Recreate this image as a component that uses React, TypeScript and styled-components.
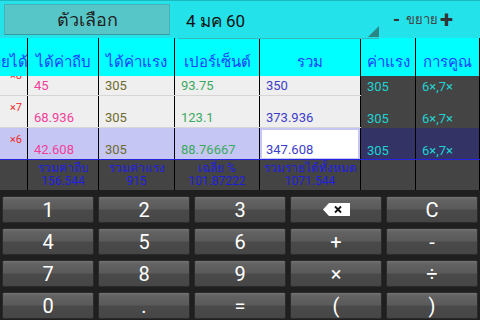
import React from "react";
import styled, { createGlobalStyle } from "styled-components";

const GlobalStyle = createGlobalStyle`
    html, body {
        margin: 0;
        padding: 0;
        background: #1f1f1f;
        font-family: Roboto, "Noto Sans", "DejaVu Sans", sans-serif;
    }
    * {
        box-sizing: border-box;
    }
`;

const COLS = "28px 71px 76px 85px 101px 55px 64px";

type Row = {
    label: string;
    thib: string;
    raeng: string;
    percent: string;
    total: string;
    wage: string;
    mult: string;
    selected?: boolean;
};

const rows: Row[] = [
    { label: "×8", thib: "45", raeng: "305", percent: "93.75", total: "350", wage: "305", mult: "6×,7×" },
    { label: "×7", thib: "68.936", raeng: "305", percent: "123.1", total: "373.936", wage: "305", mult: "6×,7×" },
    { label: "×6", thib: "42.608", raeng: "305", percent: "88.76667", total: "347.608", wage: "305", mult: "6×,7×", selected: true },
];

const headers = ["ได้ค่าถีบ", "ได้ค่าแรง", "เปอร์เซ็นต์", "รวม", "ค่าแรง", "การคูณ"];

const summary = [
    ["รวมค่าถีบ", "156.544"],
    ["รวมค่าแรง", "915"],
    ["เฉลี่ย %", "101.87222"],
    ["รวมรายได้ทั้งหมด", "1071.544"],
];

const keys = ["1", "2", "3", "back", "C", "4", "5", "6", "+", "-", "7", "8", "9", "×", "÷", "0", ".", "=", "(", ")"];

export default function App() {
    return (
        <Screen>
            <GlobalStyle />
            <TopBar>
                <OptionButton>ตัวเลือก</OptionButton>
                <DateSpinner>
                    4 มค 60
                    <SpinnerCorner />
                </DateSpinner>
                <ZoomControl>
                    <ZoomSign>-</ZoomSign>
                    <ZoomLabel>ขยาย</ZoomLabel>
                    <ZoomSign $big>+</ZoomSign>
                </ZoomControl>
            </TopBar>

            <HeaderRow>
                <HeaderCell $clip>
                    <ClippedText>รายได้</ClippedText>
                </HeaderCell>
                {headers.map((h) => (
                    <HeaderCell key={h}>{h}</HeaderCell>
                ))}
            </HeaderRow>

            <BodyViewport>
                <BodyScroll>
                    {rows.map((r) => (
                        <DataRow key={r.label} $selected={r.selected}>
                            <LabelCell>{r.label}</LabelCell>
                            <ValueCell $color="#f0409a">{r.thib}</ValueCell>
                            <ValueCell $color="#6e6a2c">{r.raeng}</ValueCell>
                            <ValueCell $color="#3aaa5e">{r.percent}</ValueCell>
                            <ValueCell $color="#3c3cc8">
                                {r.selected ? <EditBox>{r.total}</EditBox> : r.total}
                            </ValueCell>
                            <DarkCell $selected={r.selected}>{r.wage}</DarkCell>
                            <DarkCell $selected={r.selected}>{r.mult}</DarkCell>
                        </DataRow>
                    ))}
                </BodyScroll>
            </BodyViewport>

            <SummaryRow>
                <SummaryCell />
                {summary.map(([t, v]) => (
                    <SummaryCell key={t}>
                        <span>{t}</span>
                        <span>{v}</span>
                    </SummaryCell>
                ))}
                <SummaryCell />
                <SummaryCell />
            </SummaryRow>

            <Keypad>
                {keys.map((k) => (
                    <Key key={k}>
                        {k === "back" ? (
                            <svg width="27" height="13" viewBox="0 0 27 13">
                                <path d="M6 0H27V13H6L0 6.5Z" fill="#fff" />
                                <path d="M12 3.5L18 9.5M18 3.5L12 9.5" stroke="#111" strokeWidth="1.8" />
                            </svg>
                        ) : (
                            k
                        )}
                    </Key>
                ))}
            </Keypad>
        </Screen>
    );
}

const Screen = styled.div`
    width: 480px;
    height: 320px;
    overflow: hidden;
    background: #1f1f1f;
`;

const TopBar = styled.div`
    height: 38px;
    display: flex;
    align-items: center;
    background: #24e2ea;
    border-top: 1px solid #1cb8c0;
    padding: 0 4px;
`;

const OptionButton = styled.div`
    width: 166px;
    height: 31px;
    display: flex;
    align-items: center;
    justify-content: center;
    background: #56c6c8;
    border: 1px solid #48b0b2;
    border-bottom-color: #3a9a9c;
    color: #222;
    font-size: 18px;
`;

const DateSpinner = styled.div`
    position: relative;
    margin-left: 8px;
    width: 201px;
    height: 36px;
    display: flex;
    align-items: center;
    padding: 0 0 0 8px;
    margin-top: 2px;
    border-bottom: 1px solid #3bb6ba;
    color: #111;
    font-size: 17px;
`;

const SpinnerCorner = styled.div`
    position: absolute;
    right: 0;
    bottom: 1px;
    width: 0;
    height: 0;
    border-left: 11px solid transparent;
    border-bottom: 11px solid #2a8585;
`;

const ZoomControl = styled.div`
    display: flex;
    align-items: center;
    margin-left: 14px;
    gap: 6px;
    color: #444;
`;

const ZoomSign = styled.span<{ $big?: boolean }>`
    font-size: ${(p) => (p.$big ? 24 : 18)}px;
    font-weight: bold;
    color: #333;
    line-height: 1;
    margin-left: ${(p) => (p.$big ? -4 : 0)}px;
`;

const ZoomLabel = styled.span`
    font-size: 13px;
    color: #444;
`;

const HeaderRow = styled.div`
    display: grid;
    grid-template-columns: ${COLS};
    height: 38px;
    background: #00ffff;
`;

const HeaderCell = styled.div<{ $clip?: boolean }>`
    display: flex;
    align-items: flex-end;
    justify-content: ${(p) => (p.$clip ? "flex-end" : "center")};
    overflow: hidden;
    white-space: nowrap;
    border-right: 1px solid #000;
    color: #1c40ff;
    font-size: 15px;
    padding-bottom: 2px;
`;

const ClippedText = styled.span`
    margin-right: -1px;
`;

const BodyViewport = styled.div`
    height: 83px;
    overflow: hidden;
`;

const BodyScroll = styled.div`
    margin-top: -12px;
`;

const DataRow = styled.div<{ $selected?: boolean }>`
    display: grid;
    grid-template-columns: ${COLS};
    height: 32px;
    background: ${(p) => (p.$selected ? "#c6c6f4" : "#efefef")};
    border-bottom: 1px solid ${(p) => (p.$selected ? "#c6c6f4" : "#d6d6d6")};
`;

const LabelCell = styled.div`
    border-right: 1px solid #000;
    color: #f02828;
    font-size: 11px;
    text-align: right;
    padding: 5px 5px 0 0;
`;

const ValueCell = styled.div<{ $color: string }>`
    display: flex;
    align-items: flex-end;
    border-right: 1px solid #000;
    color: ${(p) => p.$color};
    font-size: 13px;
    padding: 0 0 2px 6px;
    white-space: nowrap;
    overflow: hidden;
`;

const EditBox = styled.div`
    flex: 1;
    height: 28px;
    margin: 0 2px -1px -4px;
    background: #fff;
    display: flex;
    align-items: flex-end;
    padding: 0 0 1px 4px;
`;

const DarkCell = styled.div<{ $selected?: boolean }>`
    display: flex;
    align-items: flex-end;
    border-right: 1px solid #000;
    background: ${(p) => (p.$selected ? "#333366" : "#444")};
    color: #22d2d2;
    font-size: 13px;
    padding: 0 0 2px 6px;
    margin-bottom: -1px;
`;

const SummaryRow = styled.div`
    display: grid;
    grid-template-columns: ${COLS};
    height: 31px;
    background: #444;
    border-top: 1px solid #2424e0;
`;

const SummaryCell = styled.div`
    display: flex;
    flex-direction: column;
    align-items: center;
    justify-content: center;
    border-right: 1px solid #000;
    color: #1e1ee0;
    font-size: 12px;
    line-height: 13px;
    white-space: nowrap;
    overflow: hidden;
`;

const Keypad = styled.div`
    display: grid;
    grid-template-columns: repeat(5, 92px);
    grid-auto-rows: 27px;
    gap: 5px 4px;
    padding: 6px 2px 0;
    background: #1f1f1f;
`;

const Key = styled.div`
    display: flex;
    align-items: center;
    justify-content: center;
    border: 1px solid #2b2b2b;
    border-radius: 2px;
    background: linear-gradient(
        to bottom,
        #727272 0%,
        #626262 12%,
        #5a5a5a 48%,
        #4a4a4a 52%,
        #464646 100%
    );
    color: #fff;
    font-size: 20px;
`;
